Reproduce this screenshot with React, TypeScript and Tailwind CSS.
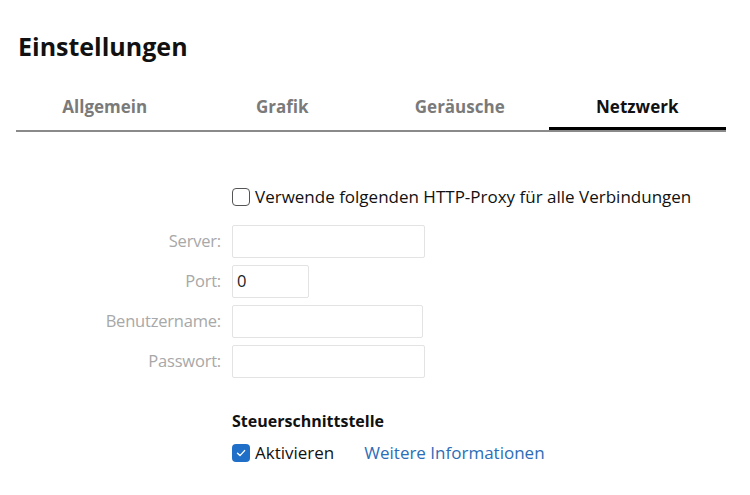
import React from "react";

const font = { fontFamily: '"Open Sans", "Noto Sans", sans-serif' };

function Field({ label, width, value }: { label: string; width: string; value?: string }) {
  return (
    <div className="flex items-center h-[33px]">
      <div className="w-[216px] pr-[11px] text-right text-[16.5px] text-[#a8a8a8] tracking-[-0.2px]">{label}</div>
      <div className={`h-[33px] ${width} border border-[#e3e3e3] rounded-[2px] bg-white flex items-center pl-[4px] text-[16.5px] text-[#222]`}>
        {value}
      </div>
    </div>
  );
}

export default function App() {
  return (
    <div className="w-[750px] h-[495px] bg-white text-black" style={font}>
      <div className="pl-[18px] pt-[28px]">
        <h1 className="text-[25px] font-bold leading-[36px] text-[#111]">Einstellungen</h1>
      </div>
      <div className="mx-[16px] w-[710px] mt-[31px] grid grid-cols-4 border-b-2 border-[#8a8a8a]">
        {["Allgemein", "Grafik", "Geräusche", "Netzwerk"].map((t, i) => (
          <div
            key={t}
            className={
              i === 3
                ? "h-[35px] flex items-start justify-center text-[17px] leading-[24px] font-bold text-[#111] border-b-[3px] border-black -mb-[2px]"
                : "h-[35px] flex items-start justify-center text-[17px] leading-[24px] font-bold text-[#7a7a7a]"
            }
          >
            {t}
          </div>
        ))}
      </div>
      <div className="mt-[55px] pl-[232px] flex items-center h-[20px]">
        <div className="w-[18px] h-[18px] border border-[#555] rounded-[4px] bg-white" />
        <span className="ml-[5px] text-[17px] text-[#111]">Verwende folgenden HTTP-Proxy für alle Verbindungen</span>
      </div>
      <div className="mt-[18px] pl-[16px] flex flex-col gap-[7px]">
        <Field label="Server:" width="w-[193px]" />
        <Field label="Port:" width="w-[77px]" value="0" />
        <Field label="Benutzername:" width="w-[191px]" />
        <Field label="Passwort:" width="w-[193px]" />
      </div>
      <div className="pl-[232px] mt-[33px] text-[16px] font-bold text-[#111] leading-[20px]">Steuerschnittstelle</div>
      <div className="pl-[232px] mt-[12px] flex items-center h-[20px]">
        <div className="w-[18px] h-[18px] rounded-[4px] bg-[#1f6fc8] flex items-center justify-center">
          <svg width="12" height="12" viewBox="0 0 12 12" fill="none">
            <path d="M2.5 6.2 L5 8.6 L9.6 3.6" stroke="white" strokeWidth="1.4" strokeLinecap="round" strokeLinejoin="round" />
          </svg>
        </div>
        <span className="ml-[5px] text-[17px] text-[#111]">Aktivieren</span>
        <span className="ml-[30px] text-[17px] text-[#2c6db8]">Weitere Informationen</span>
      </div>
    </div>
  );
}
